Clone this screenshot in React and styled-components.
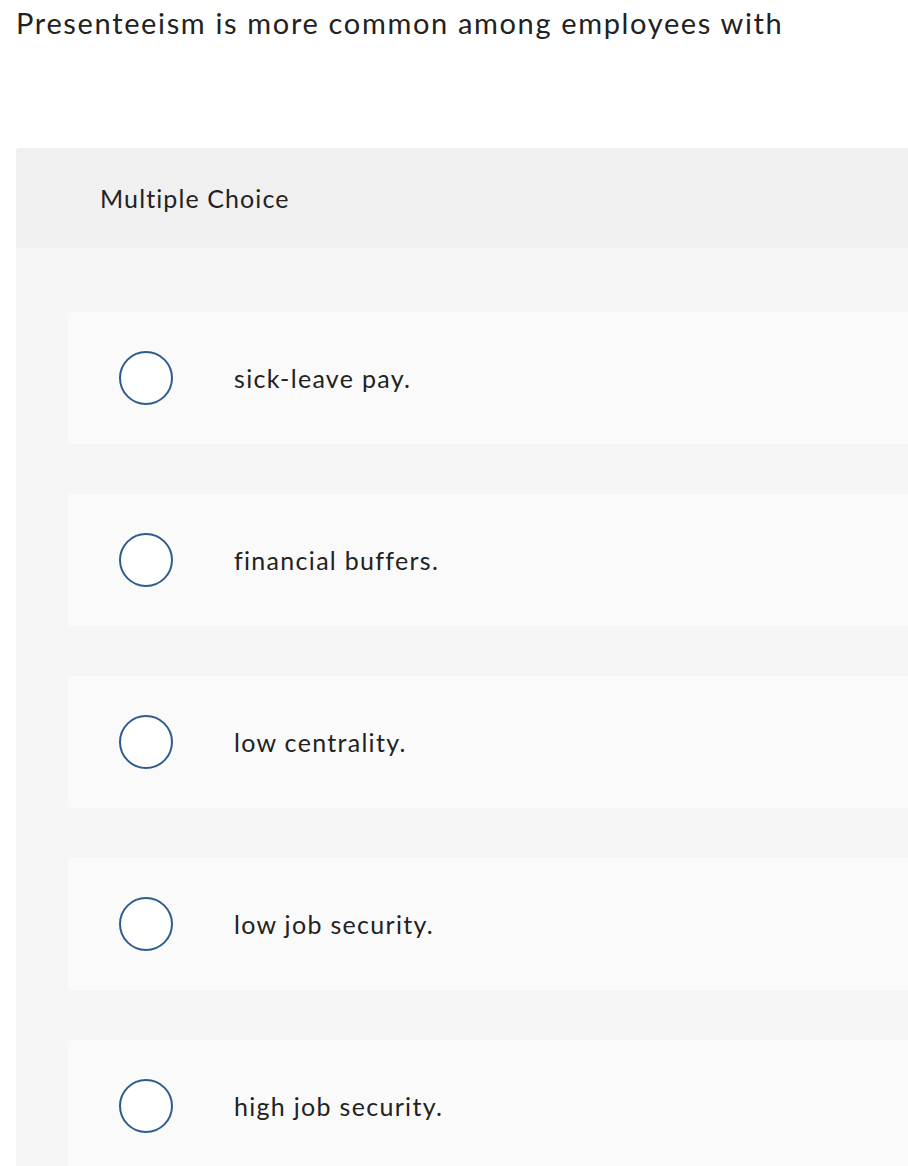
import React from "react";
import styled, { createGlobalStyle } from "styled-components";

const Global = createGlobalStyle`
  html, body { margin: 0; padding: 0; background: #fff; overflow: hidden; }
  body { font-family: Lato, "Open Sans", sans-serif; color: #222; }
`;

const Page = styled.div`
  width: 908px;
  overflow: hidden;
`;

const Question = styled.h1`
  margin: 0;
  padding: 3px 0 0 16px;
  font-size: 29px;
  font-weight: 400;
  line-height: 40px;
  letter-spacing: 1.65px;
  color: #222;
  height: 148px;
  box-sizing: border-box;
  white-space: nowrap;
`;

const Panel = styled.section`
  margin-left: 16px;
  width: 1000px;
  border-radius: 4px 0 0 0;
  overflow: hidden;
  background: #f5f5f5;
`;

const Header = styled.div`
  height: 100px;
  background: #f0f0f0;
  display: flex;
  align-items: center;
  padding-left: 84px;
  font-size: 25px;
  letter-spacing: 1.1px;
  color: #222;
`;

const List = styled.div`
  display: flex;
  flex-direction: column;
  gap: 50px;
  padding: 64px 0 40px 52px;
`;

const Option = styled.label`
  display: flex;
  align-items: center;
  height: 132px;
  background: #fafafa;
  border-radius: 4px;
  padding-left: 51px;
  gap: 61px;
  font-size: 25px;
  letter-spacing: 1.3px;
  color: #222;
  cursor: pointer;
`;

const Radio = styled.span`
  flex: none;
  width: 54px;
  height: 54px;
  box-sizing: border-box;
  border: 2px solid #2d5b8e;
  border-radius: 50%;
  background: #fff;
`;

const options = [
  "sick-leave pay.",
  "financial buffers.",
  "low centrality.",
  "low job security.",
  "high job security.",
];

export default function App() {
  return (
    <Page>
      <Global />
      <Question>Presenteeism is more common among employees with</Question>
      <Panel>
        <Header>Multiple Choice</Header>
        <List>
          {options.map((o) => (
            <Option key={o}>
              <Radio />
              <span>{o}</span>
            </Option>
          ))}
        </List>
      </Panel>
    </Page>
  );
}
